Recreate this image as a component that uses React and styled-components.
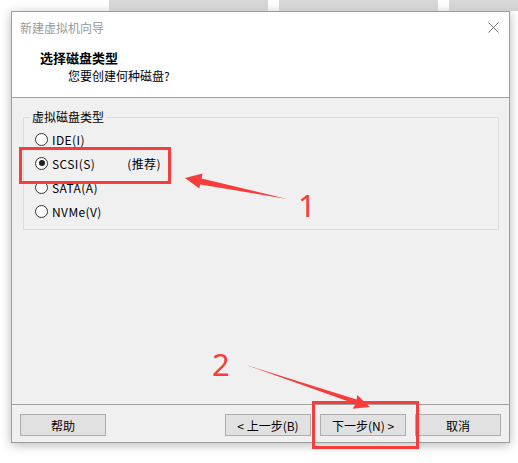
import React from "react";
import styled, { createGlobalStyle } from "styled-components";

const Global = createGlobalStyle`
  html, body { margin: 0; padding: 0; background: #ffffff; }
  body { font-family: "Noto Sans CJK SC", "Noto Sans", sans-serif; }
`;

const Screen = styled.div`
  position: relative;
  width: 518px;
  height: 463px;
  overflow: hidden;
  background: #ffffff;
`;

const TileStrip = styled.div`
  display: flex;
  gap: 11px;
  height: 11px;
  padding-left: 109px;
`;

const Tile = styled.div`
  width: ${(p) => (p.$grow ? "auto" : "159px")};
  flex: ${(p) => (p.$grow ? "1" : "none")};
  background: linear-gradient(#d9d9d9, #cfcfcf);
`;

const Dialog = styled.div`
  box-sizing: border-box;
  margin-left: 11px;
  width: 499px;
  height: 432px;
  border: 1px solid #9c9c9c;
  display: flex;
  flex-direction: column;
  background: #f0f0f0;
  box-shadow: 0 2px 10px rgba(0, 0, 0, 0.28);
`;

const TitleBar = styled.div`
  height: 31px;
  display: flex;
  align-items: center;
  justify-content: space-between;
  padding: 0 10px 0 8px;
  background: #ffffff;
  font-size: 12px;
  color: #9a9a9a;
`;

const CloseIcon = styled.svg`
  width: 11px;
  height: 11px;
  margin-top: -1px;
`;

const Header = styled.div`
  height: 55px;
  box-sizing: border-box;
  padding: 7px 0 0 28px;
  background: #ffffff;
  border-bottom: 1px solid #a0a0a0;
  color: #000;
`;

const HeaderTitle = styled.div`
  font-size: 13px;
  font-weight: 700;
  line-height: 16px;
`;

const HeaderSub = styled.div`
  margin: 2px 0 0 28px;
  font-size: 12px;
  line-height: 16px;
`;

const Body = styled.div`
  flex: 1;
  padding: 12px 10px 0 11px;
`;

const Group = styled.fieldset`
  margin: 0;
  padding: 3px 0 6px 11px;
  border: 1px solid #dcdcdc;
  min-width: 0;
`;

const GroupLabel = styled.legend`
  padding: 0 2px;
  margin-left: -5px;
  font-size: 12px;
  line-height: 14px;
  color: #000;
`;

const RadioRow = styled.label`
  display: flex;
  align-items: center;
  height: 24px;
  font-size: 12px;
  color: #000;
  letter-spacing: 0.4px;
`;

const RadioCircle = styled.span`
  box-sizing: border-box;
  width: 13px;
  height: 13px;
  border-radius: 50%;
  border: 1px solid #333;
  background: #fff;
  margin-right: 4px;
  display: flex;
  align-items: center;
  justify-content: center;
  &::after {
    content: "";
    width: 6px;
    height: 6px;
    border-radius: 50%;
    background: ${(p) => (p.$checked ? "#222" : "transparent")};
  }
`;

const Recommend = styled.span`
  margin-left: 32px;
`;

const ButtonBar = styled.div`
  height: 38px;
  box-sizing: border-box;
  border-top: 1px solid #a0a0a0;
  display: flex;
  align-items: flex-start;
  padding: 9px 8px 0 8px;
  gap: 9px;
`;

const Button = styled.button`
  box-sizing: border-box;
  width: 86px;
  height: 22px;
  margin: 0;
  padding: 0;
  border: 1px solid #adadad;
  background: #e1e1e1;
  font-family: "Noto Sans CJK SC", "Noto Sans", sans-serif;
  font-size: 12px;
  color: #000;
  margin-right: ${(p) => (p.$push ? "auto" : "0")};
`;

const Highlight = styled.div`
  position: absolute;
  box-sizing: border-box;
  border: 3px solid #f83c3c;
  left: ${(p) => p.$x}px;
  top: ${(p) => p.$y}px;
  width: ${(p) => p.$w}px;
  height: ${(p) => p.$h}px;
`;

const Arrows = styled.svg`
  position: absolute;
  left: 0;
  top: 0;
  width: 518px;
  height: 463px;
  pointer-events: none;
`;

const Number = styled.span`
  position: absolute;
  left: ${(p) => p.$x}px;
  top: ${(p) => p.$y}px;
  font-family: "Noto Sans", sans-serif;
  font-weight: 400;
  font-size: 31px;
  line-height: 31px;
  color: #f83c3c;
`;

const radios = [
  { label: "IDE(I)" },
  { label: "SCSI(S)", checked: true, extra: "(推荐)" },
  { label: "SATA(A)" },
  { label: "NVMe(V)" },
];

export default function App() {
  return (
    <Screen>
      <Global />
      <TileStrip>
        <Tile />
        <Tile />
        <Tile $grow />
      </TileStrip>
      <Dialog>
        <TitleBar>
          <span>新建虚拟机向导</span>
          <CloseIcon viewBox="0 0 11 11">
            <path d="M0.5 0.5 L10.5 10.5 M10.5 0.5 L0.5 10.5" stroke="#777" strokeWidth="1" />
          </CloseIcon>
        </TitleBar>
        <Header>
          <HeaderTitle>选择磁盘类型</HeaderTitle>
          <HeaderSub>您要创建何种磁盘?</HeaderSub>
        </Header>
        <Body>
          <Group>
            <GroupLabel>虚拟磁盘类型</GroupLabel>
            {radios.map((r) => (
              <RadioRow key={r.label}>
                <RadioCircle $checked={r.checked} />
                {r.label}
                {r.extra && <Recommend>{r.extra}</Recommend>}
              </RadioRow>
            ))}
          </Group>
        </Body>
        <ButtonBar>
          <Button $push>帮助</Button>
          <Button>&lt; 上一步(B)</Button>
          <Button>下一步(N) &gt;</Button>
          <Button>取消</Button>
        </ButtonBar>
      </Dialog>

      <Highlight $x={19} $y={147} $w={152} $h={37} />
      <Highlight $x={312} $y={401} $w={107} $h={48} />
      <Arrows viewBox="0 0 518 463">
        <polygon
          points="185,178 202.5,173.5 201.6,178.6 287,199 200.2,184.5 199.3,188.5"
          fill="#f83c3c"
        />
        <polygon
          points="370,407 352.6,408.8 355.6,404 246,365 356.6,399.4 357.2,395"
          fill="#f83c3c"
        />
      </Arrows>
      <Number $x={298} $y={190}>1</Number>
      <Number $x={212} $y={349}>2</Number>
    </Screen>
  );
}
